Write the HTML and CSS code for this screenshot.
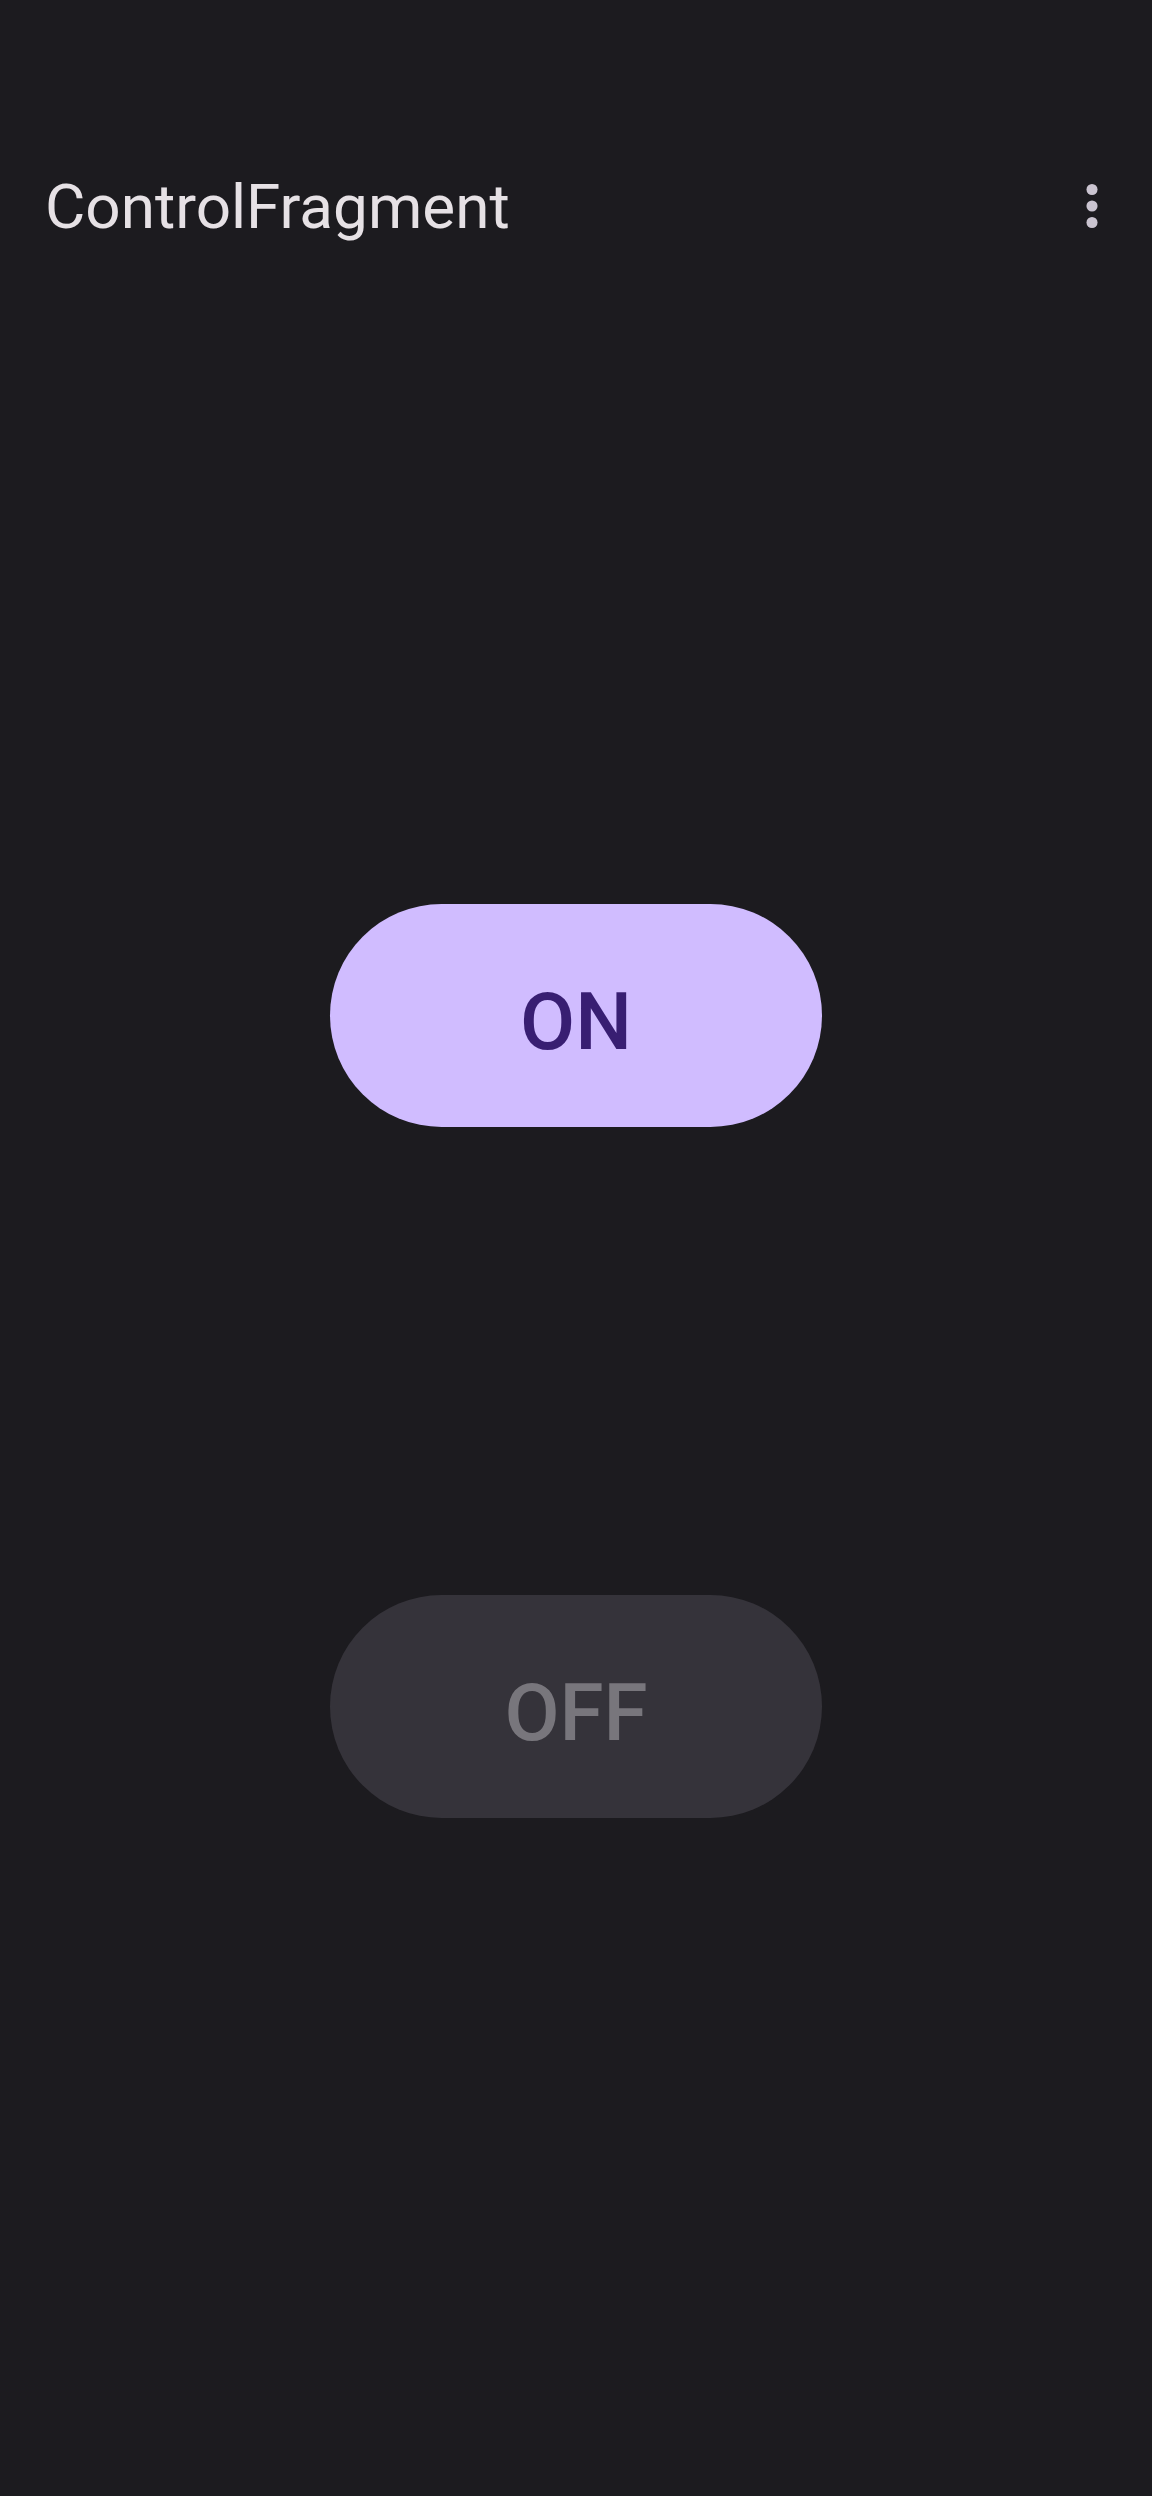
FILE: index.html
```html
<!DOCTYPE html>
<html>
<head>
<meta charset="utf-8">
<link rel="stylesheet" href="styles.css">
</head>
<body>
<header class="appbar">
  <h1 class="title">ControlFragment</h1>
  <button class="overflow" aria-label="More options">
    <svg width="72" height="72" viewBox="0 0 24 24"><circle cx="12" cy="6.5" r="1.85" fill="#cac4d0"/><circle cx="12" cy="12" r="1.85" fill="#cac4d0"/><circle cx="12" cy="17.5" r="1.85" fill="#cac4d0"/></svg>
  </button>
</header>
<main class="content">
  <button class="pill pill-on">ON</button>
  <button class="pill pill-off">OFF</button>
</main>
</body>
</html>
```
FILE: styles.css
```css
html, body {
  margin: 0;
  padding: 0;
}
body {
  background: #1c1b1f;
  width: 1152px;
  height: 2496px;
  font-family: Roboto, "Noto Sans", sans-serif;
  overflow: hidden;
}
.appbar {
  display: flex;
  align-items: center;
  justify-content: space-between;
  height: 192px;
  margin-top: 110px;
  padding: 0 24px 0 45px;
}
.title {
  margin: 0;
  font-size: 62px;
  font-weight: 400;
  color: #e6e1e5;
  letter-spacing: 0;
}
.overflow {
  background: none;
  border: 0;
  padding: 0;
  width: 72px;
  height: 72px;
  display: flex;
}
.content {
  display: flex;
  flex-direction: column;
  align-items: center;
  gap: 468px;
  padding-top: 602px;
}
.pill {
  width: 492px;
  height: 223px;
  border-radius: 112px;
  border: 0;
  font-family: Roboto, "Noto Sans", sans-serif;
  font-size: 80px;
  font-weight: 500;
  padding: 12px 0 0 0;
  letter-spacing: 0;
}
.pill-on {
  background: #d0bcff;
  color: #381e72;
}
.pill-off {
  background: #35333a;
  color: #78767c;
}
```
